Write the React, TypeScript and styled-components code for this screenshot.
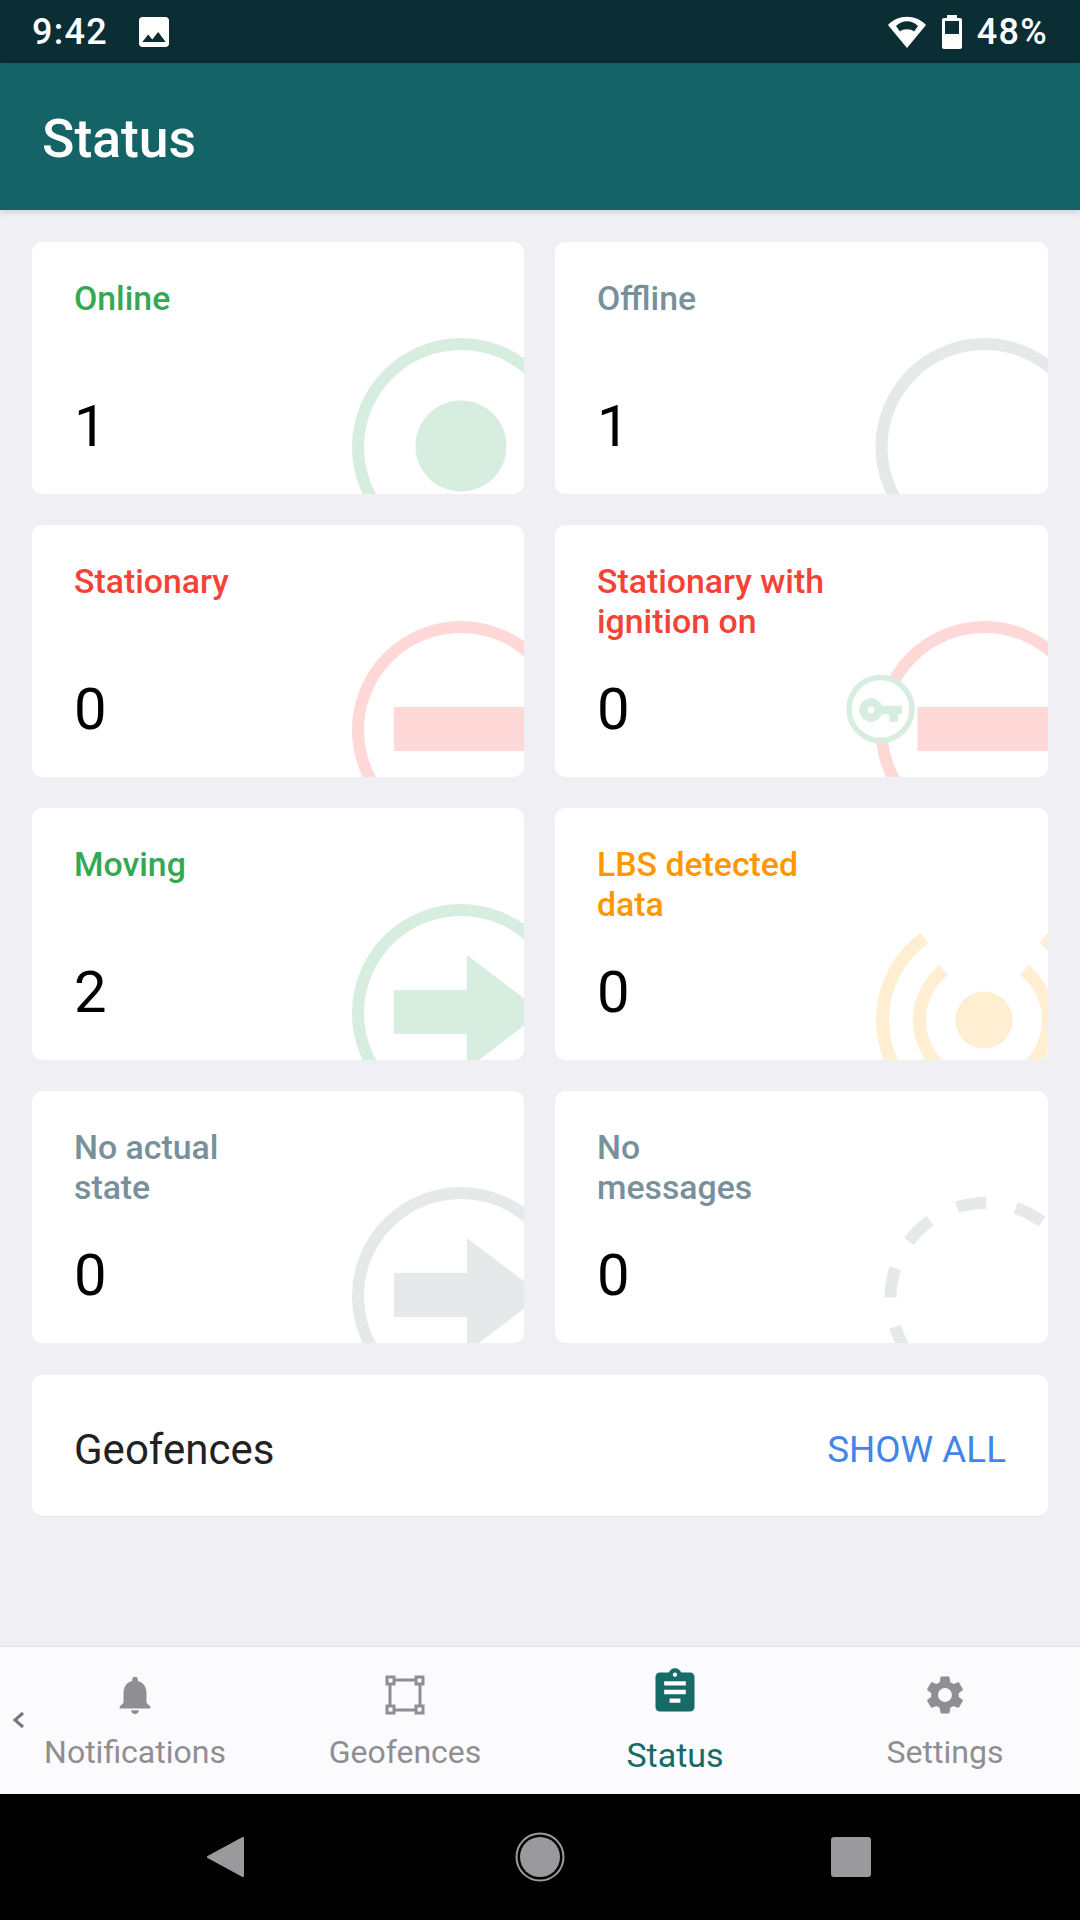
import React from "react";
import styled, { createGlobalStyle } from "styled-components";

const Global = createGlobalStyle`
  html, body { margin: 0; padding: 0; background: #000; }
  * { box-sizing: border-box; }
`;

const Screen = styled.div`
  width: 1080px;
  height: 1920px;
  display: flex;
  flex-direction: column;
  overflow: hidden;
  background: #efeff4;
  font-family: Roboto, "Noto Sans", sans-serif;
`;

const StatusBar = styled.div`
  height: 63px;
  flex: none;
  background: #0a2e33;
  color: #fff;
  display: flex;
  align-items: center;
  padding: 0 32px;
  font-size: 36px;
  font-weight: 500;
  letter-spacing: 1.3px;
`;
const StatusGroup = styled.div<{ $gap: number }>`
  display: flex;
  align-items: center;
  gap: ${(p) => p.$gap}px;
`;
const Spacer = styled.div`
  flex: 1;
`;
const AppBar = styled.div`
  height: 147px;
  flex: none;
  background: #146367;
  color: #fff;
  display: flex;
  align-items: center;
  padding: 4px 42px 0;
  font-size: 53.5px;
  font-weight: 500;
  position: relative;
  z-index: 1;
  box-shadow: 0 2px 6px rgba(0, 0, 0, 0.14);
`;
const Main = styled.div`
  flex: 1;
  padding: 32px 32px 0;
  display: flex;
  flex-direction: column;
  gap: 32px;
`;
const CardGrid = styled.div`
  display: grid;
  grid-template-columns: 492px 493px;
  grid-auto-rows: 252px;
  column-gap: 31px;
  row-gap: 31px;
`;
const Card = styled.div`
  position: relative;
  overflow: hidden;
  background: #fff;
  border-radius: 10px;
  padding: 37px 42px 34px;
  display: flex;
  flex-direction: column;
`;
const Label = styled.div<{ $color: string }>`
  position: relative;
  color: ${(p) => p.$color};
  font-size: 33.8px;
  font-weight: 500;
  line-height: 40px;
  white-space: pre-line;
`;
const Value = styled.div`
  position: relative;
  margin-top: auto;
  color: #000;
  font-size: 58px;
  line-height: 68px;
  font-weight: 400;
`;
const Art = styled.svg`
  position: absolute;
  left: 0;
  top: 0;
  width: 100%;
  height: 100%;
`;
const GeoCard = styled.div`
  height: 142px;
  background: #fff;
  border-radius: 10px;
  border-bottom: 1px solid #e2e2e6;
  padding: 7px 42px 0;
  display: flex;
  align-items: center;
  justify-content: space-between;
`;
const GeoTitle = styled.div`
  font-size: 42px;
  color: #212121;
`;
const ShowAll = styled.div`
  font-size: 36.8px;
  color: #4285e8;
`;
const BottomNav = styled.div`
  position: relative;
  height: 148px;
  flex: none;
  background: #fbfafc;
  border-top: 1px solid #dedee2;
  display: grid;
  grid-template-columns: repeat(4, 1fr);
`;
const Tab = styled.div<{ $active?: boolean }>`
  display: flex;
  flex-direction: column;
  align-items: center;
  color: ${(p) => (p.$active ? "#166a68" : "#8e8e93")};
  font-size: ${(p) => (p.$active ? 34 : 32)}px;
  padding-top: ${(p) => (p.$active ? 19 : 25)}px;
`;
const TabIcon = styled.svg<{ $size: number }>`
  width: ${(p) => p.$size}px;
  height: ${(p) => p.$size}px;
  display: block;
`;
const TabText = styled.div<{ $active?: boolean }>`
  margin-top: ${(p) => (p.$active ? 17 : 14)}px;
  line-height: 40px;
`;
const Chevron = styled.svg`
  position: absolute;
  left: 11px;
  top: 63px;
  width: 15px;
  height: 20px;
`;
const SystemNav = styled.div`
  height: 126px;
  flex: none;
  background: #000;
  display: grid;
  grid-template-columns: repeat(3, 312px);
  justify-content: center;
  align-items: center;
`;
const NavGlyph = styled.svg`
  display: block;
  margin: 0 auto;
`;

const GREEN = "#d6ede0";
const RED = "#ffd8d7";
const ORANGE = "#ffeed2";
const GRAY = "#e6e9ea";

const Ring = ({ c }: { c: string }) => (
  <circle cx="429" cy="205" r="103" fill="none" stroke={c} strokeWidth="12" />
);
const Arrow = ({ c }: { c: string }) => (
  <path d="M362 182H435V147L510 204L435 261V226H362Z" fill={c} />
);
const Bar = ({ c }: { c: string }) => <rect x="362" y="182" width="140" height="44" fill={c} />;

type Kind = "online" | "offline" | "stationary" | "ignition" | "moving" | "lbs" | "stale" | "none";

const Drawing = ({ kind }: { kind: Kind }) => (
  <Art viewBox="0 0 492 252">
    {kind === "online" && (
      <>
        <Ring c={GREEN} />
        <circle cx="429" cy="204" r="45.5" fill={GREEN} />
      </>
    )}
    {kind === "offline" && <Ring c={GRAY} />}
    {kind === "stationary" && (
      <>
        <Ring c={RED} />
        <Bar c={RED} />
      </>
    )}
    {kind === "ignition" && (
      <>
        <Ring c={RED} />
        <Bar c={RED} />
        <circle cx="325" cy="184" r="31.5" fill="#fff" stroke={GREEN} strokeWidth="5.5" />
        <g transform="translate(302.2 162.2) scale(1.9)">
          <path
            fill={GREEN}
            stroke={GREEN}
            strokeWidth="0.5"
            d="M12.65 10C11.83 7.67 9.61 6 7 6c-3.31 0-6 2.69-6 6s2.69 6 6 6c2.61 0 4.83-1.67 5.65-4H17v4h4v-4h2v-4H12.65zM7 14c-1.1 0-2-.9-2-2s.9-2 2-2 2 .9 2 2-.9 2-2 2z"
          />
        </g>
      </>
    )}
    {kind === "moving" && (
      <>
        <Ring c={GREEN} />
        <Arrow c={GREEN} />
      </>
    )}
    {kind === "lbs" && (
      <>
        <circle cx="428.5" cy="212" r="28.5" fill={ORANGE} />
        <g fill="none" stroke={ORANGE} strokeWidth="13">
          <path d="M388 162A64 64 0 0 0 388 262M469 162A64 64 0 0 1 469 262" />
          <path d="M369 130A101 101 0 0 0 369 294M488 130A101 101 0 0 1 488 294" />
        </g>
      </>
    )}
    {kind === "stale" && (
      <>
        <Ring c={GRAY} />
        <Arrow c={GRAY} />
      </>
    )}
    {kind === "none" && (
      <circle
        cx="430"
        cy="207"
        r="95"
        fill="none"
        stroke={GRAY}
        strokeWidth="12"
        strokeDasharray="29.85 29.85"
      />
    )}
  </Art>
);

const cards: { label: string; color: string; value: number; kind: Kind }[] = [
  { label: "Online", color: "#34a853", value: 1, kind: "online" },
  { label: "Offline", color: "#78909c", value: 1, kind: "offline" },
  { label: "Stationary", color: "#f44336", value: 0, kind: "stationary" },
  { label: "Stationary with\nignition on", color: "#f44336", value: 0, kind: "ignition" },
  { label: "Moving", color: "#34a853", value: 2, kind: "moving" },
  { label: "LBS detected\ndata", color: "#ff9800", value: 0, kind: "lbs" },
  { label: "No actual\nstate", color: "#78909c", value: 0, kind: "stale" },
  { label: "No\nmessages", color: "#78909c", value: 0, kind: "none" },
];

export default function App() {
  return (
    <Screen>
      <Global />
      <StatusBar>
        <StatusGroup $gap={26}>
          <span>9:42</span>
          <svg width="40" height="40" viewBox="0 0 24 24" fill="#fff">
            <path d="M21 19V5c0-1.1-.9-2-2-2H5c-1.1 0-2 .9-2 2v14c0 1.1.9 2 2 2h14c1.1 0 2-.9 2-2zM8.5 13.5l2.5 3.01L14.5 12l4.5 6H5l3.5-4.5z" />
          </svg>
        </StatusGroup>
        <Spacer />
        <StatusGroup $gap={14}>
          <svg width="40" height="34" viewBox="0 0 40 34">
            <path
              fill="#fff"
              fillRule="evenodd"
              d="M20 33L1 10C11 -1 29 -1 39 10ZM9 11C15 4.5 25 4.5 31 11L27 16.5C24 13.5 16 13.5 13 16.5Z"
            />
          </svg>
          <svg width="22" height="34" viewBox="0 0 22 34">
            <path
              fillRule="evenodd"
              fill="#fff"
              d="M6 0H16V3H19C20.5 3 21 4 21 5V32C21 33 20 34 19 34H3C2 34 1 33 1 32V5C1 4 1.5 3 3 3H6ZM4 6V19H18V6Z"
            />
          </svg>
          <span>48%</span>
        </StatusGroup>
      </StatusBar>
      <AppBar>Status</AppBar>
      <Main>
        <CardGrid>
          {cards.map((c) => (
            <Card key={c.label}>
              <Drawing kind={c.kind} />
              <Label $color={c.color}>{c.label}</Label>
              <Value>{c.value}</Value>
            </Card>
          ))}
        </CardGrid>
        <GeoCard>
          <GeoTitle>Geofences</GeoTitle>
          <ShowAll>SHOW ALL</ShowAll>
        </GeoCard>
      </Main>
      <BottomNav>
        <Chevron viewBox="0 0 15 20">
          <path d="M12 3L4 10L12 17" fill="none" stroke="#77777c" strokeWidth="3" />
        </Chevron>
        <Tab>
          <TabIcon $size={46} viewBox="0 0 24 24" fill="currentColor">
            <path d="M12 22c1.1 0 2-.9 2-2h-4c0 1.1.89 2 2 2zm6-6v-5c0-3.07-1.64-5.64-4.5-6.32V4c0-.83-.67-1.5-1.5-1.5s-1.5.67-1.5 1.5v.68C7.63 5.36 6 7.92 6 11v5l-2 2v1h16v-1l-2-2z" />
          </TabIcon>
          <TabText>Notifications</TabText>
        </Tab>
        <Tab>
          <TabIcon $size={46} viewBox="0 0 46 46" fill="none">
            <rect x="8" y="8" width="30" height="30" stroke="currentColor" strokeWidth="3" />
            {[5, 34].map((x) =>
              [5, 34].map((y) => (
                <rect key={`${x}-${y}`} x={x} y={y} width="7" height="7" fill="#fbfafc" stroke="currentColor" strokeWidth="3" />
              ))
            )}
          </TabIcon>
          <TabText>Geofences</TabText>
        </Tab>
        <Tab $active>
          <TabIcon $size={52} viewBox="0 0 24 24" fill="currentColor">
            <path d="M19 3h-4.18C14.4 1.84 13.3 1 12 1c-1.3 0-2.4.84-2.82 2H5c-1.1 0-2 .9-2 2v14c0 1.1.9 2 2 2h14c1.1 0 2-.9 2-2V5c0-1.1-.9-2-2-2zm-7 0c.55 0 1 .45 1 1s-.45 1-1 1-1-.45-1-1 .45-1 1-1zm5 4v2H7V7h10zm0 4v2H7v-2h10zm-2.5 4v2h-5v-2h5z" />
          </TabIcon>
          <TabText $active>Status</TabText>
        </Tab>
        <Tab>
          <TabIcon $size={46} viewBox="0 0 24 24" fill="currentColor">
            <path d="M19.14 12.94c.04-.3.06-.61.06-.94 0-.32-.02-.64-.07-.94l2.03-1.58c.18-.14.23-.41.12-.61l-1.92-3.32c-.12-.22-.37-.29-.59-.22l-2.39.96c-.5-.38-1.03-.7-1.62-.94l-.36-2.54c-.04-.24-.24-.41-.48-.41h-3.84c-.24 0-.43.17-.47.41l-.36 2.54c-.59.24-1.13.57-1.62.94l-2.39-.96c-.22-.08-.47 0-.59.22L2.74 8.87c-.12.21-.08.47.12.61l2.03 1.58c-.05.3-.09.63-.09.94s.02.64.07.94l-2.03 1.58c-.18.14-.23.41-.12.61l1.92 3.32c.12.22.37.29.59.22l2.39-.96c.5.38 1.03.7 1.62.94l.36 2.54c.05.24.24.41.48.41h3.84c.24 0 .44-.17.47-.41l.36-2.54c.59-.24 1.13-.56 1.62-.94l2.39.96c.22.08.47 0 .59-.22l1.92-3.32c.12-.22.07-.47-.12-.61l-2.01-1.58zM12 15.6c-1.98 0-3.6-1.62-3.6-3.6s1.62-3.6 3.6-3.6 3.6 1.62 3.6 3.6-1.62 3.6-3.6 3.6z" />
          </TabIcon>
          <TabText>Settings</TabText>
        </Tab>
      </BottomNav>
      <SystemNav>
        <NavGlyph width="44" height="42" viewBox="0 0 44 42">
          <path d="M37 2L2 21L37 40Z" fill="#9a999c" stroke="#9a999c" strokeWidth="2" strokeLinejoin="round" />
        </NavGlyph>
        <NavGlyph width="50" height="50" viewBox="0 0 50 50">
          <circle cx="25" cy="25" r="23.5" fill="none" stroke="#9a999c" strokeWidth="2" />
          <circle cx="25" cy="25" r="20" fill="#9a999c" />
        </NavGlyph>
        <NavGlyph width="42" height="40" viewBox="0 0 42 40">
          <rect width="40" height="40" rx="3" fill="#9a999c" />
        </NavGlyph>
      </SystemNav>
    </Screen>
  );
}
